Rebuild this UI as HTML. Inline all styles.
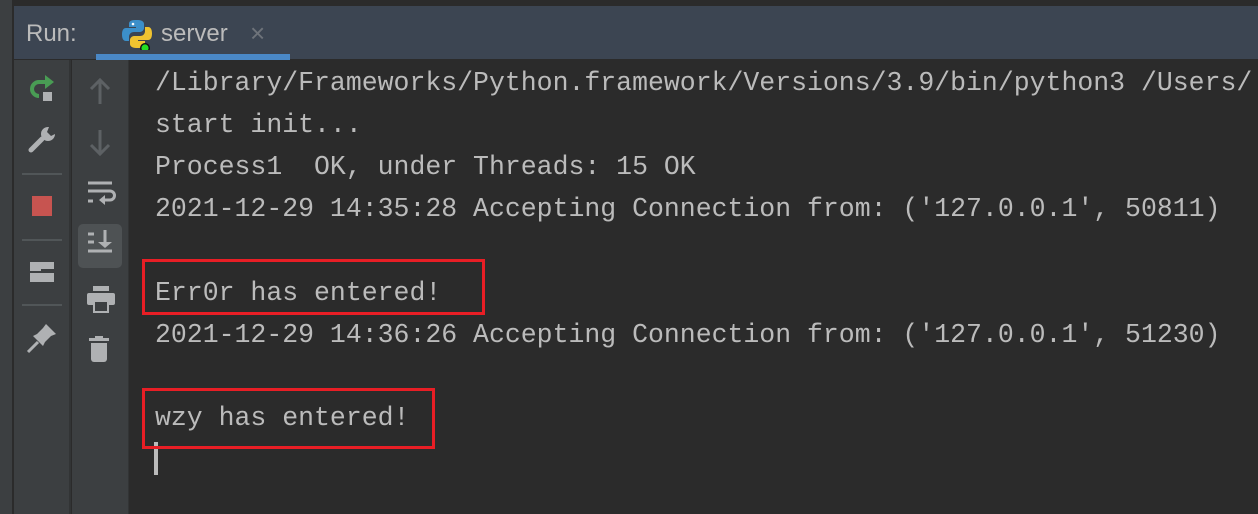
<!DOCTYPE html>
<html><head><meta charset="utf-8"><style>
body{margin:0;width:1258px;height:514px;overflow:hidden;background:#2b2b2b;position:relative;font-family:"Liberation Mono",monospace}
div{position:absolute;box-sizing:border-box}
.t{left:155px;color:#bbbbbb;font-size:26.5px;white-space:pre;line-height:30px}
.box{border:3px solid #e81e25}
</style></head><body>
<div style="left:0;top:0;width:1258px;height:6px;background:#2b2b2b"></div>
<div style="left:0;top:0;width:13px;height:514px;background:#3c3f41;border-right:1px solid #2b2b2b"></div>
<div style="left:14px;top:6px;width:1244px;height:53px;background:#3c4552"></div>
<div style="left:26px;top:20px;color:#bbbbbb;font-family:'Liberation Sans',sans-serif;font-size:24px">Run:</div>
<svg style="position:absolute;left:121px;top:18px" width="32" height="32" viewBox="0 0 32 32">
<path d="M14 2c-5 0-6 2-6 4v3h7v1H5c-3 0-4 3-4 6.5S2 23 5 23h3v-4c0-3 2-5 5-5h6c2 0 4-2 4-4V6c0-2-2-4-6-4z" fill="#3c8fc9"/>
<circle cx="12" cy="6" r="1.3" fill="#fff"/>
<path d="M18 30c5 0 6-2 6-4v-3h-7v-1h10c3 0 4-3 4-6.5S30 9 27 9h-3v4c0 3-2 5-5 5h-6c-2 0-4 2-4 4v4c0 2 2 4 6 4z" fill="#f0c330"/>
<circle cx="24" cy="30" r="5" fill="#111"/><circle cx="24" cy="30" r="3.6" fill="#22dd22"/>
</svg>
<div style="left:161px;top:20px;color:#bbbbbb;font-family:'Liberation Sans',sans-serif;font-size:24px">server</div>
<div style="left:250px;top:18px;color:#6e737a;font-family:'Liberation Sans',sans-serif;font-size:26px">×</div>
<div style="left:96px;top:54px;width:194px;height:6px;background:#4a88c7"></div>
<div style="left:14px;top:60px;width:57px;height:454px;background:#3c3f41;border-right:2px solid #323435"></div>
<div style="left:72px;top:60px;width:57px;height:454px;background:#3c3f41;border-right:1px solid #323435"></div>
<svg style="position:absolute;left:28px;top:74px" width="30" height="30" viewBox="0 0 30 30"><path d="M18 8H11a7 7 0 1 0 0 14" fill="none" stroke="#499c54" stroke-width="4"/><path d="M17 1l9 7-9 7z" fill="#499c54"/><rect x="15" y="18" width="9" height="9" fill="#afb1b3"/></svg>
<svg style="position:absolute;left:28px;top:124px" width="30" height="30" viewBox="0 0 30 30"><path d="M3 26l11-11" stroke="#afb1b3" stroke-width="5" stroke-linecap="round"/><path d="M20 3a7 7 0 1 0 7 7l-4 2-4-4 2-5z" fill="#afb1b3"/></svg>
<div style="left:22px;top:173px;width:40px;height:2px;background:#515658"></div>
<div style="left:32px;top:196px;width:20px;height:20px;background:#c75450"></div>
<div style="left:22px;top:239px;width:40px;height:2px;background:#515658"></div>
<div style="left:30px;top:262px;width:24px;height:7px;background:#afb1b3"></div>
<div style="left:30px;top:262px;width:11px;height:9px;background:#afb1b3"></div>
<div style="left:30px;top:271px;width:24px;height:11px;background:#afb1b3;border-top:2px solid #3c3f41"></div>
<div style="left:22px;top:304px;width:40px;height:2px;background:#515658"></div>
<svg style="position:absolute;left:26px;top:322px" width="32" height="32" viewBox="0 0 32 32"><path d="M20 2l10 10-5 2-6 6-2 4-10-10 4-2 6-6z" fill="#afb1b3"/><path d="M2 30l10-10" stroke="#afb1b3" stroke-width="3"/></svg>
<svg style="position:absolute;left:86px;top:76px" width="28" height="30" viewBox="0 0 28 30"><path d="M14 4v24M5 13l9-9 9 9" fill="none" stroke="#5d6164" stroke-width="3"/></svg>
<svg style="position:absolute;left:86px;top:128px" width="28" height="30" viewBox="0 0 28 30"><path d="M14 2v24M5 17l9 9 9-9" fill="none" stroke="#5d6164" stroke-width="3"/></svg>
<svg style="position:absolute;left:86px;top:180px" width="30" height="32" viewBox="0 0 30 32"><path d="M2 3h24M2 11h22a4 4 0 0 1 0 9H16M2 21h5" fill="none" stroke="#afb1b3" stroke-width="3"/><path d="M19 15l-6 5 6 5z" fill="#afb1b3"/></svg>
<div style="left:78px;top:224px;width:44px;height:44px;background:#4e5254;border-radius:5px"></div>
<svg style="position:absolute;left:86px;top:230px" width="30" height="32" viewBox="0 0 30 32"><path d="M2 4h6M2 12h6M2 21h24M19 0v14" fill="none" stroke="#afb1b3" stroke-width="3"/><path d="M12 12h14l-7 6z" fill="#afb1b3"/></svg>
<svg style="position:absolute;left:86px;top:284px" width="30" height="30" viewBox="0 0 30 30"><rect x="7" y="2" width="16" height="5" fill="#afb1b3"/><rect x="1" y="9" width="28" height="12" rx="2" fill="#afb1b3"/><rect x="8" y="17" width="14" height="11" fill="#3c3f41" stroke="#afb1b3" stroke-width="2"/></svg>
<svg style="position:absolute;left:88px;top:335px" width="24" height="30" viewBox="0 0 24 30"><rect x="1" y="3" width="20" height="3" fill="#afb1b3"/><rect x="7" y="1" width="8" height="3" fill="#afb1b3"/><path d="M3 8h16v16a3 3 0 0 1-3 3H6a3 3 0 0 1-3-3z" fill="#afb1b3"/></svg>
<div class="t" style="top:68px">/Library/Frameworks/Python.framework/Versions/3.9/bin/python3 /Users/</div>
<div class="t" style="top:110px">start init...</div>
<div class="t" style="top:152px">Process1  OK, under Threads: 15 OK</div>
<div class="t" style="top:194px">2021-12-29 14:35:28 Accepting Connection from: ('127.0.0.1', 50811)</div>
<div class="t" style="top:278px">Err0r has entered!</div>
<div class="t" style="top:320px">2021-12-29 14:36:26 Accepting Connection from: ('127.0.0.1', 51230)</div>
<div class="t" style="top:403px">wzy has entered!</div>
<div style="left:154px;top:442px;width:4px;height:33px;background:#bbbbbb"></div>
<div class="box" style="left:142px;top:259px;width:343px;height:56px"></div>
<div class="box" style="left:142px;top:388px;width:293px;height:61px"></div>
</body></html>
